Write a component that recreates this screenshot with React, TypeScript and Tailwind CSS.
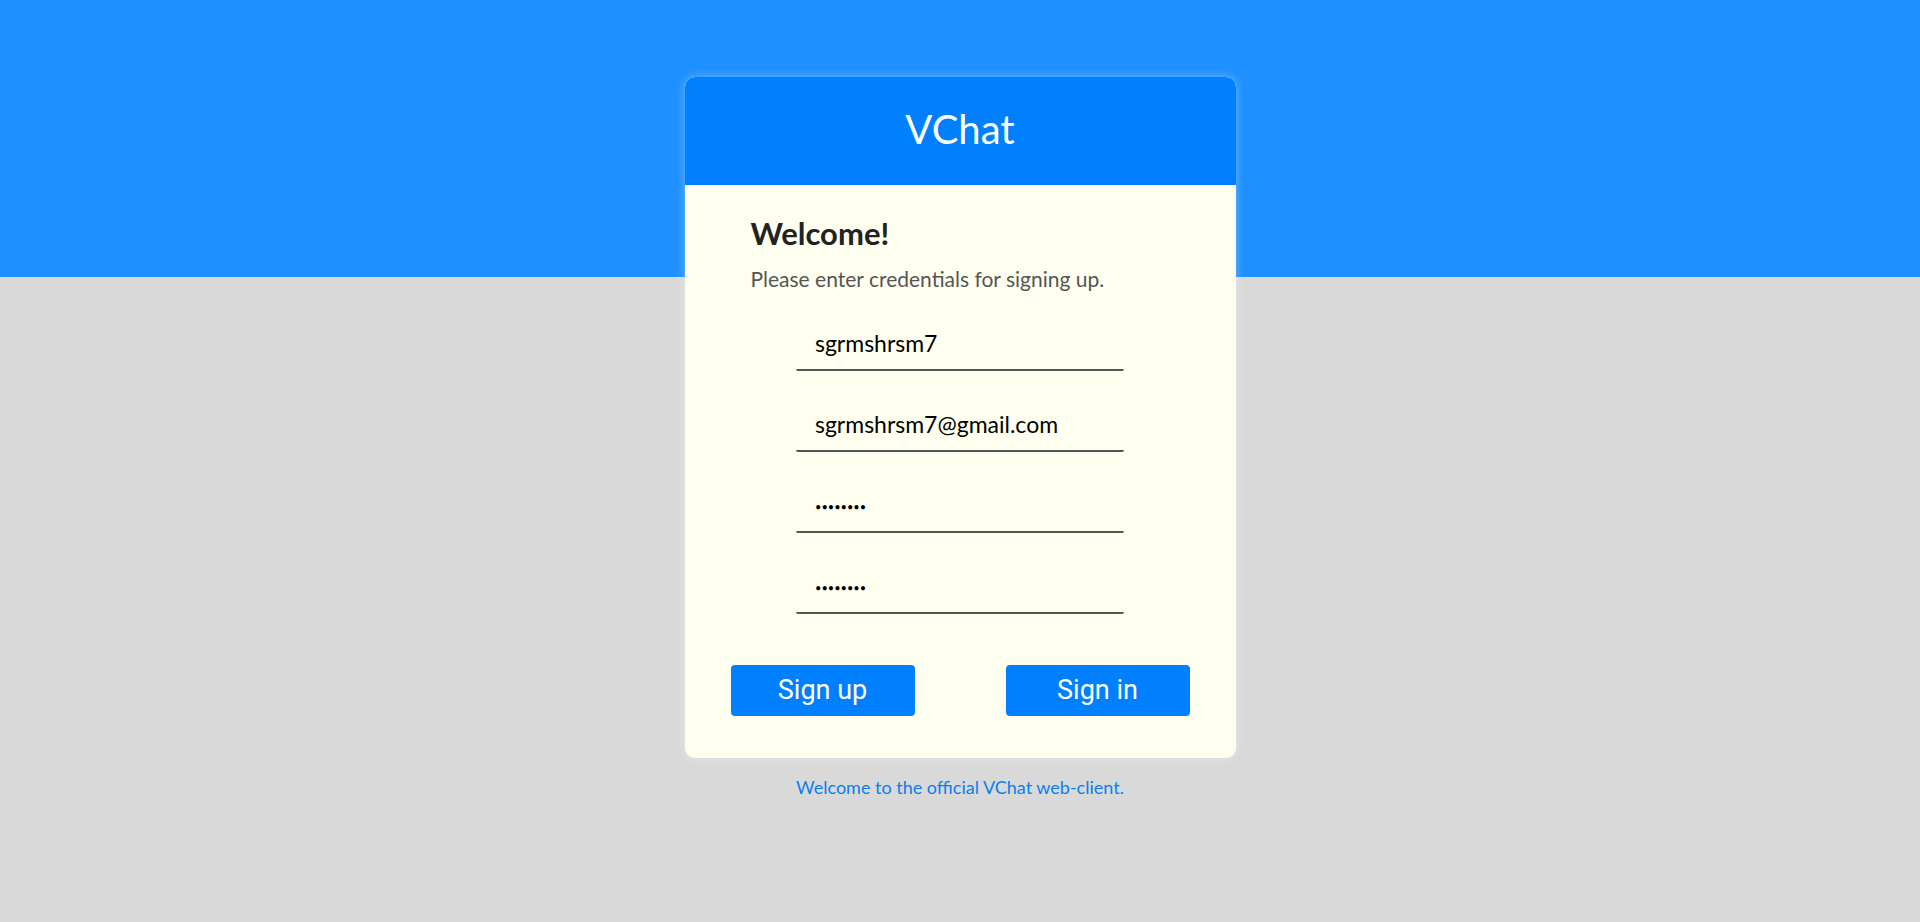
export default function App() {
    const font = { fontFamily: 'Lato, "Noto Sans", sans-serif' }

    return (
        <div
            style={font}
            className="min-h-screen w-full bg-[linear-gradient(to_bottom,#1f90ff_277px,#d9d9d9_277px)] flex flex-col items-center"
        >
            {/* Card */}
            <div className="mt-[77px] w-[551px] rounded-[10px] overflow-hidden bg-[#fffff0] shadow-[0_0_10px_rgba(255,255,255,0.35)]">
                {/* Header */}
                <div className="h-[108px] pb-[4px] bg-[#0080ff] flex items-center justify-center">
                    <span className="text-[40px] text-white leading-none">VChat</span>
                </div>

                {/* Body */}
                <div className="px-[66px] pt-[29px]">
                    <h1 className="text-[31px] font-bold text-[#222] leading-[38px]">Welcome!</h1>
                    <p className="mt-[14px] text-[21px] text-[#555] leading-[26px]">
                        Please enter credentials for signing up.
                    </p>
                </div>

                {/* Inputs */}
                <div className="flex flex-col items-center gap-[25px] mt-[23px]">
                    <Field type="text" value="sgrmshrsm7" />
                    <Field type="email" value="sgrmshrsm7@gmail.com" />
                    <Field type="password" value="12345678" small />
                    <Field type="password" value="12345678" small />
                </div>

                {/* Buttons */}
                <div className="flex justify-between px-[46px] mt-[51px] pb-[42px]">
                    <button className="w-[184px] h-[51px] rounded-[4px] bg-[#0080ff] text-white text-[27px] font-['Roboto',sans-serif]">
                        Sign up
                    </button>
                    <button className="w-[184px] h-[51px] rounded-[4px] bg-[#0080ff] text-white text-[27px] font-['Roboto',sans-serif]">
                        Sign in
                    </button>
                </div>
            </div>

            <p className="mt-[16px] text-[18px] text-[#0a7ff0]">Welcome to the official VChat web-client.</p>
        </div>
    )
}

function Field({ type, value, small }: { type: string; value: string; small?: boolean }) {
    return (
        <input
            type={type}
            defaultValue={value}
            className={
                small
                    ? 'w-[328px] h-[56px] px-[19px] pt-[4px] bg-transparent text-[11px] text-black outline-none border-b-2 border-[#555] rounded-[2px]'
                    : 'w-[328px] h-[56px] px-[19px] pt-[2px] bg-transparent text-[23px] text-black outline-none border-b-2 border-[#555] rounded-[2px]'
            }
        />
    )
}
